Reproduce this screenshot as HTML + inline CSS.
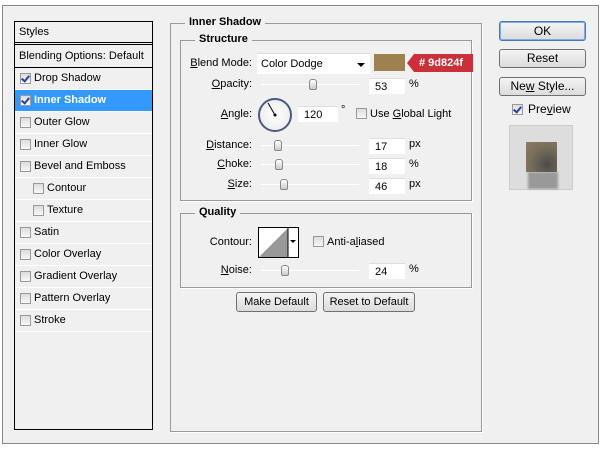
<!DOCTYPE html>
<html><head><style>
*{margin:0;padding:0;box-sizing:border-box}
body{width:600px;height:450px;background:#fff;font-family:"Liberation Sans",Arial,sans-serif;font-size:11px;color:#000;position:relative;overflow:hidden;white-space:nowrap}
.a{position:absolute}
.dlg{left:2px;top:5px;width:597px;height:439px;background:#f0f0f0;border:1px solid #888}
.list{left:14px;top:21px;width:139px;height:409px;border:1px solid #000;background:#f0f0f0}
.row{position:absolute;left:0;width:137px;height:22px;border-bottom:1px solid #fff;line-height:21px;padding-left:19px}
.cb{position:absolute;width:11px;height:11px;border:1px solid #999;background:linear-gradient(#ddd,#f8f8f8);top:5px}
.row .cb{left:5px}
.ck::after{content:"";position:absolute;left:2px;top:0px;width:3px;height:6px;border:solid #2a3e9a;border-width:0 2px 2px 0;transform:rotate(40deg)}
.fs{border:1px solid #999;box-shadow:1px 1px 0 #fff}
.lg{position:absolute;background:#f0f0f0;font-weight:bold;padding:0 4px;font-size:11px}
.lbl{position:absolute;text-align:right;width:80px}
.inp{position:absolute;background:#fff;height:16px;line-height:16px;padding-left:6px;border-top:1px solid #ddd}
.sl{position:absolute;height:1px;background:#aaa;width:98px;left:261px;border-bottom:1px solid #fff}
.th{position:absolute;width:8px;height:11px;background:linear-gradient(#fff,#ccc);border:1px solid #888;border-radius:3px 3px 2px 2px;top:-5px}
.btn{position:absolute;border:1px solid #707070;border-radius:3px;background:linear-gradient(#f4f4f4,#dcdcdc);text-align:center;height:20px;line-height:18px}
u{text-decoration:underline}
</style></head><body>
<div class="a dlg"></div>
<div class="a list">
 <div class="row" style="top:0;height:23px;padding-left:4px;border-bottom:3px double #000;line-height:20px">Styles</div>
 <div class="row" style="top:24px;height:22px;padding-left:4px;border-bottom:1px solid #000">Blending Options: Default</div>
 <div class="row" style="top:46px"><span class="cb ck"></span>Drop Shadow</div>
 <div class="row" style="top:68px;background:#3399ff;color:#fff;font-weight:bold"><span class="cb ck"></span>Inner Shadow</div>
 <div class="row" style="top:90px"><span class="cb"></span>Outer Glow</div>
 <div class="row" style="top:112px"><span class="cb"></span>Inner Glow</div>
 <div class="row" style="top:134px"><span class="cb"></span>Bevel and Emboss</div>
 <div class="row" style="top:156px;padding-left:32px"><span class="cb" style="left:18px"></span>Contour</div>
 <div class="row" style="top:178px;padding-left:32px"><span class="cb" style="left:18px"></span>Texture</div>
 <div class="row" style="top:200px"><span class="cb"></span>Satin</div>
 <div class="row" style="top:222px"><span class="cb"></span>Color Overlay</div>
 <div class="row" style="top:244px"><span class="cb"></span>Gradient Overlay</div>
 <div class="row" style="top:266px"><span class="cb"></span>Pattern Overlay</div>
 <div class="row" style="top:288px"><span class="cb"></span>Stroke</div>
</div>

<div class="a fs" style="left:170px;top:23px;width:312px;height:409px"></div>
<div class="lg" style="left:185px;top:16px">Inner Shadow</div>
<div class="a fs" style="left:180px;top:40px;width:292px;height:161px"></div>
<div class="lg" style="left:195px;top:33px">Structure</div>

<div class="lbl" style="left:172px;top:57px"><u>B</u>lend Mode:</div>
<div class="inp" style="left:257px;top:53px;width:113px;height:21px;line-height:21px;padding-left:4px">Color Dodge<span class="a" style="right:5px;top:9px;border:4px solid transparent;border-top:4px solid #000;border-bottom:0"></span></div>
<div class="a" style="left:374px;top:54px;width:31px;height:17px;background:#9d824f"></div>
<div class="a" style="left:414px;top:54px;width:59px;height:18px;background:#c9303a;color:#fff;font-weight:bold;line-height:18px;padding-left:5px;font-size:11px"># 9d824f</div>
<div class="a" style="left:407px;top:54px;border:9px solid transparent;border-right:7px solid #c9303a;border-left:0"></div>

<div class="lbl" style="left:172px;top:78px"><u>O</u>pacity:</div>
<div class="sl" style="top:84px"><div class="th" style="left:48px"></div></div>
<div class="inp" style="left:369px;top:78px;width:36px">53</div>
<div class="a" style="left:409px;top:78px">%</div>

<div class="lbl" style="left:172px;top:108px"><u>A</u>ngle:</div>
<div class="a" style="left:258px;top:98px;width:34px;height:34px;border-radius:50%;border:2px solid #4a5a80;background:radial-gradient(#fff,#e8e8e8)"></div>
<svg class="a" style="left:258px;top:98px" width="34" height="34"><line x1="17" y1="17" x2="10" y2="5" stroke="#000" stroke-width="1"/><circle cx="17" cy="17" r="1.5"/></svg>
<div class="inp" style="left:298px;top:106px;width:40px">120</div>
<div class="a" style="left:341px;top:104px">°</div>
<span class="cb" style="left:356px;top:108px"></span>
<div class="a" style="left:370px;top:108px">Use <u>G</u>lobal Light</div>

<div class="lbl" style="left:172px;top:139px"><u>D</u>istance:</div>
<div class="sl" style="top:145px"><div class="th" style="left:13px"></div></div>
<div class="inp" style="left:369px;top:138px;width:36px">17</div>
<div class="a" style="left:409px;top:138px">px</div>

<div class="lbl" style="left:172px;top:158px"><u>C</u>hoke:</div>
<div class="sl" style="top:164px"><div class="th" style="left:14px"></div></div>
<div class="inp" style="left:369px;top:158px;width:36px">18</div>
<div class="a" style="left:409px;top:158px">%</div>

<div class="lbl" style="left:172px;top:178px"><u>S</u>ize:</div>
<div class="sl" style="top:184px"><div class="th" style="left:19px"></div></div>
<div class="inp" style="left:369px;top:178px;width:36px">46</div>
<div class="a" style="left:409px;top:178px">px</div>

<div class="a fs" style="left:180px;top:213px;width:292px;height:75px"></div>
<div class="lg" style="left:195px;top:206px">Quality</div>
<div class="lbl" style="left:172px;top:236px">Contour:</div>
<div class="a" style="left:258px;top:227px;width:41px;height:31px;border:1px solid #000;background:#fff"></div>
<svg class="a" style="left:259px;top:228px" width="30" height="29"><polygon points="0,29 29,0 29,29" fill="#999"/><line x1="29" y1="0" x2="29" y2="29" stroke="#000"/></svg>
<div class="a" style="left:290px;top:240px;border:3px solid transparent;border-top:3px solid #000;border-bottom:0"></div>
<span class="cb" style="left:313px;top:236px"></span>
<div class="a" style="left:327px;top:236px">Anti-a<u>l</u>iased</div>
<div class="lbl" style="left:172px;top:264px"><u>N</u>oise:</div>
<div class="sl" style="top:270px"><div class="th" style="left:20px"></div></div>
<div class="inp" style="left:369px;top:263px;width:36px">24</div>
<div class="a" style="left:409px;top:263px">%</div>

<div class="btn" style="left:236px;top:292px;width:81px">Make Default</div>
<div class="btn" style="left:323px;top:292px;width:92px">Reset to Default</div>

<div class="btn" style="left:499px;top:21px;width:87px;height:20px;border-color:#3c7fb1;box-shadow:inset 0 0 0 1px #8ad;font-size:12px">OK</div>
<div class="btn" style="left:499px;top:49px;width:87px;height:19px;font-size:12px;line-height:17px">Reset</div>
<div class="btn" style="left:499px;top:77px;width:87px;height:19px;font-size:12px;line-height:17px">Ne<u>w</u> Style...</div>
<span class="cb ck" style="left:512px;top:104px"></span>
<div class="a" style="left:528px;top:102px;font-size:12px">Pre<u>v</u>iew</div>
<div class="a" style="left:509px;top:125px;width:64px;height:65px;background:#ddd;border:1px solid #ccc"></div>
<div class="a" style="left:528px;top:172px;width:30px;height:17px;background:#999;filter:blur(1px)"></div>
<div class="a" style="left:526px;top:142px;width:31px;height:30px;background:radial-gradient(circle at 70% 75%,#4e4c48,#7a705c 60%,#8a7c62)"></div>
</body></html>
